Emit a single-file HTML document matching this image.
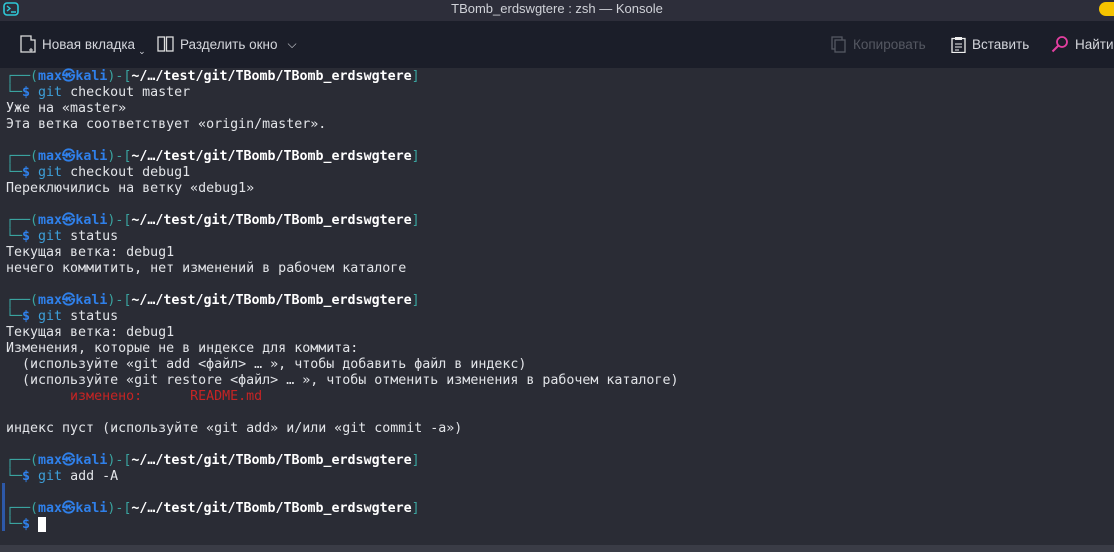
<!DOCTYPE html>
<html><head><meta charset="utf-8"><style>
*{margin:0;padding:0;box-sizing:border-box}
body{width:1114px;height:552px;overflow:hidden;background:#2a2c35;font-family:"Liberation Sans","DejaVu Sans",sans-serif;position:relative}
#title{position:absolute;left:0;top:0;width:1114px;height:21px;background:#2d2e3a;color:#d0d2d8;font-size:13px;text-align:center;line-height:17px}
#tb{position:absolute;left:0;top:21px;width:1114px;height:47px;background:#1b1e29;color:#d4d6dc;font-size:13.5px}
.it{position:absolute;top:14px;display:flex;align-items:center;gap:6px;height:18px}
#term{position:absolute;left:6px;top:69px;font-family:"DejaVu Sans Mono","Liberation Mono",monospace;font-size:13.3px;line-height:16px;color:#e2e4e8;white-space:pre}
.t{color:#3aa4a0}.b{color:#2f80ea;font-weight:bold}.w{color:#fff;font-weight:bold}.g{color:#3d9fd9}.r{color:#c62424}
#bot{position:absolute;left:0;top:545px;width:1114px;height:7px;background:#3a3c46}
</style></head><body>
<div id="title">TBomb_erdswgtere : zsh — Konsole
<svg style="position:absolute;left:3px;top:2px" width="16" height="14" viewBox="0 0 16 14"><rect x="1" y="1" width="14" height="12" rx="3" fill="none" stroke="#2ec8d8" stroke-width="1.6"/><path d="M4 4l3 2.5-3 2.5M8 10h5" stroke="#2ec8d8" stroke-width="1.4" fill="none"/></svg>
<div style="position:absolute;left:1099px;top:2px;width:15px;height:14px;border-radius:7px 0 0 7px;background:#f5c400"></div></div>
<div id="tb">
<div class="it" style="left:20px"><svg width="16" height="18"><path d="M1 1h10v4h4v12H1z" fill="none" stroke="#ddd" stroke-width="1.3"/><path d="M11 13v4M9 15h4" stroke="#ddd"/></svg>Новая вкладка<span style="font-size:9px;margin-top:14px;margin-left:-3px">⌄</span></div>
<div class="it" style="left:157px"><svg width="17" height="16"><rect x="1" y="1" width="6.5" height="14" fill="none" stroke="#ddd" stroke-width="1.3"/><rect x="9.5" y="1" width="6.5" height="14" fill="none" stroke="#ddd" stroke-width="1.3"/></svg>Разделить окно <span style="font-size:12px;margin-left:4px">⌵</span></div>
<div class="it" style="left:831px;color:#555862"><svg width="16" height="17"><rect x="1" y="1" width="10" height="12" fill="none" stroke="#555862" stroke-width="1.3"/><rect x="4" y="4" width="10" height="12" fill="#1b1e29" stroke="#555862" stroke-width="1.3"/></svg>Копировать</div>
<div class="it" style="left:951px"><svg width="15" height="17"><rect x="1" y="2.5" width="13" height="14" fill="none" stroke="#eee" stroke-width="1.3"/><rect x="4" y="1" width="7" height="3" fill="#eee"/><path d="M4 8h7M4 11h7M4 14h4" stroke="#eee"/></svg>Вставить</div>
<div class="it" style="left:1051px"><svg width="18" height="18"><circle cx="11" cy="7" r="5" fill="none" stroke="#e33fa0" stroke-width="1.8"/><path d="M7 11L1.5 16.5" stroke="#e33fa0" stroke-width="2"/></svg>Найти</div>
</div>
<div style="position:absolute;left:2px;top:483px;width:3px;height:48px;background:#2d58a8"></div>
<div id="term"><span class="t">┌──(</span><span class="b">max㉿kali</span><span class="t">)-[</span><span class="w">~/…/test/git/TBomb/TBomb_erdswgtere</span><span class="t">]</span>
<span class="t">└─</span><span class="b">$</span> <span class="g">git</span> checkout master
Уже на «master»
Эта ветка соответствует «origin/master».

<span class="t">┌──(</span><span class="b">max㉿kali</span><span class="t">)-[</span><span class="w">~/…/test/git/TBomb/TBomb_erdswgtere</span><span class="t">]</span>
<span class="t">└─</span><span class="b">$</span> <span class="g">git</span> checkout debug1
Переключились на ветку «debug1»

<span class="t">┌──(</span><span class="b">max㉿kali</span><span class="t">)-[</span><span class="w">~/…/test/git/TBomb/TBomb_erdswgtere</span><span class="t">]</span>
<span class="t">└─</span><span class="b">$</span> <span class="g">git</span> status
Текущая ветка: debug1
нечего коммитить, нет изменений в рабочем каталоге

<span class="t">┌──(</span><span class="b">max㉿kali</span><span class="t">)-[</span><span class="w">~/…/test/git/TBomb/TBomb_erdswgtere</span><span class="t">]</span>
<span class="t">└─</span><span class="b">$</span> <span class="g">git</span> status
Текущая ветка: debug1
Изменения, которые не в индексе для коммита:
  (используйте «git add &lt;файл&gt; … », чтобы добавить файл в индекс)
  (используйте «git restore &lt;файл&gt; … », чтобы отменить изменения в рабочем каталоге)
        <span class="r">изменено:      README.md</span>

индекс пуст (используйте «git add» и/или «git commit -a»)

<span class="t">┌──(</span><span class="b">max㉿kali</span><span class="t">)-[</span><span class="w">~/…/test/git/TBomb/TBomb_erdswgtere</span><span class="t">]</span>
<span class="t">└─</span><span class="b">$</span> <span class="g">git</span> add -A

<span class="t">┌──(</span><span class="b">max㉿kali</span><span class="t">)-[</span><span class="w">~/…/test/git/TBomb/TBomb_erdswgtere</span><span class="t">]</span>
<span class="t">└─</span><span class="b">$</span> <span style="background:#fff"> </span></div>
<div id="bot"></div>
</body></html>
